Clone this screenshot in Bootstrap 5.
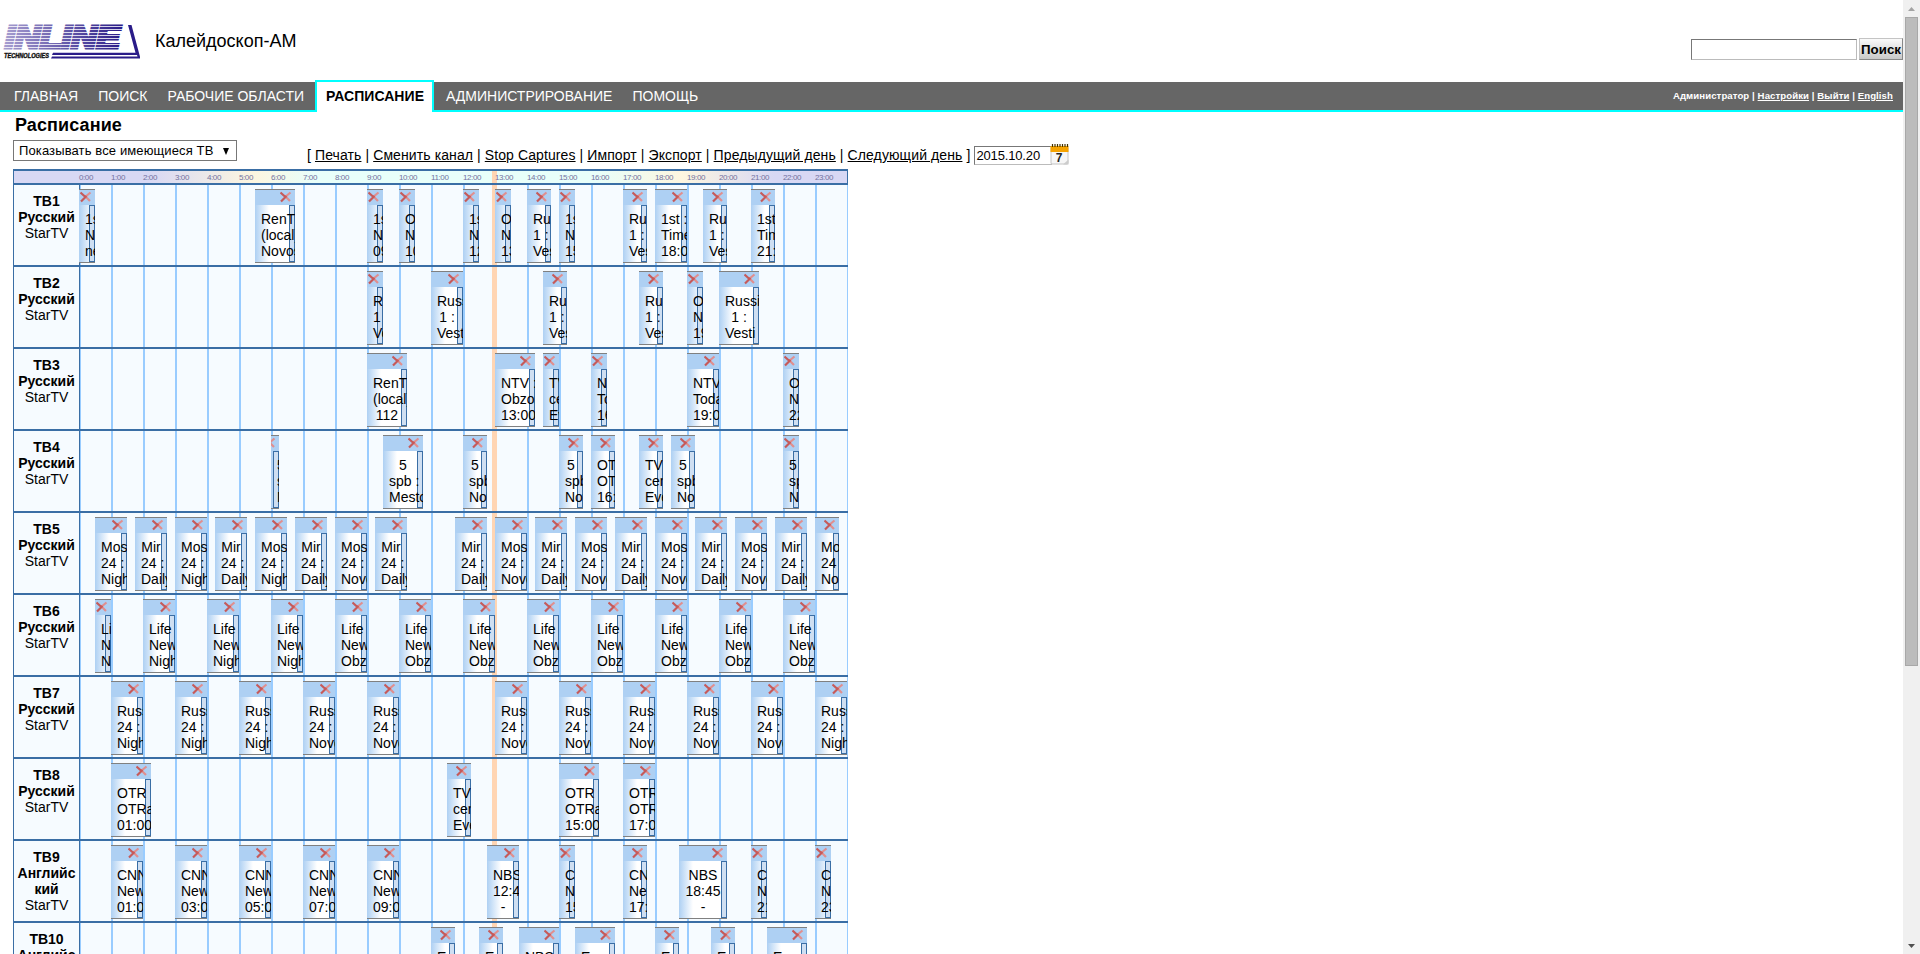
<!DOCTYPE html>
<html lang="ru">
<head>
<meta charset="utf-8">
<title>Расписание</title>
<link href="https://cdn.jsdelivr.net/npm/bootstrap@5.3.0/dist/css/bootstrap.min.css" rel="stylesheet">
<style>
html{overflow:hidden}
body{font-family:"Liberation Sans",Arial,sans-serif;font-size:14px;line-height:16px;color:#000;background:#fff;height:954px;overflow:hidden}
a{color:inherit}
.page-col{width:1903px;height:954px;overflow:hidden}
.top-band{height:82px;padding-left:3px}
.app-name{font-size:18px;line-height:20px;margin:31px 0 0 15px}
.logo-art{margin-top:24px}
.search-form{margin-top:38px;gap:2px}
.search-box{width:166px;height:21px;margin-top:1px;border:1px solid #bbb;border-top-color:#777;border-left-color:#777;padding:0 2px}
.search-btn{width:44px;height:22px;border:1px solid #c4c4c4;border-right-color:#888;border-bottom-color:#888;background:linear-gradient(#fafafa,#c8c8c8);font-weight:700;font-size:13.3px;line-height:20px;padding:1px 0 0;white-space:nowrap}
.main-bar{height:30px;background:#666;border-bottom:2px solid #0ff;padding-left:4px;color:#fff}
.main-bar .tab-item{padding:6px 10px 0;height:30px;text-decoration:none;color:#fff;white-space:nowrap}
.main-bar .tab-item.active{background:#fff;color:#000;font-weight:700;letter-spacing:.05px;border:2px solid #0ff;border-bottom:0;height:32px;margin:-2px 2px 0 1px;padding:6px 8px 0 9px;width:119px}
.user-links{font-size:9.6px;font-weight:700;letter-spacing:.09px;padding:6px 10px 0 0;white-space:nowrap}
.page-title{font-size:18px;line-height:20px;letter-spacing:.1px;font-weight:700;margin:3px 0 0 15px}
.tools-row{padding-left:13px;height:34px}
.tv-select{width:224px;height:21px;margin-top:5px;border:1px solid #777;padding:2px 5px 0;white-space:nowrap;font-size:13px;letter-spacing:.12px}
.tv-select svg{margin:5px 2px 0 0}
.action-links{margin:12px 0 0 70px;white-space:pre;letter-spacing:.1px}
.date-box{width:78px;height:19px;margin:11px 0 0 4px;border:1px solid #bbb;border-top-color:#777;border-left-color:#777;padding:1px 1px 0;font-size:13px;letter-spacing:-.15px}
.cal-icon{margin:9px 0 0 -2px}
.sched{width:835px;margin-left:13px;border-left:1px solid #3a6ea5;border-top:2px solid #3a6ea5}
.hours-row{height:14px;border-bottom:2px solid #3a6ea5;border-right:1px solid #3a6ea5;padding-left:65px;font-size:8px;letter-spacing:-.4px;line-height:12px;color:#7373a0;
 background:linear-gradient(90deg,#d8d8f4 0,#d8d8f4 135px,#fdf6e0 240px,#e8fffa 300px,#e8fffa 580px,#fdf6e0 668px,#d8d8f4 760px)}
.hours-row span{width:32px;flex:none;padding-top:1px;position:relative}
.hours-row::before{content:"";position:absolute;left:478px;top:0;width:5px;height:12px;background:#ffd5b3}
.ch-row{height:82px;background:#f6fbff;border-bottom:2px solid #3a6ea5}
.ch-name{width:65px;flex:none;padding-top:8px;text-align:center}
.track{flex:1;border-left:1px solid #3a6ea5;background:repeating-linear-gradient(90deg,#9cf 0 2px,transparent 2px 32px) border-box}
.track::before{content:"";position:absolute;left:412px;top:0;width:5px;bottom:0;background:#ffd5b3}
.rec{top:4px;height:74px;border-top:1px solid #808080;border-bottom:1px solid #808080;background:linear-gradient(90deg,#aed0f3,#fff 14px);overflow:hidden}
.rec-head{height:15px;background:#aed0f3}
.rec-head svg{right:3px;top:1px}
.rec-text{padding:6px 6px 0;text-align:center;white-space:nowrap;position:relative;z-index:1}
.rec-grip{right:0;top:15px;bottom:0;width:6px;border:1px solid #3a6ea5;background:#cfdff2;z-index:0}
.scroll-rail{width:17px;height:954px;background:#f0f0f0;padding:7px 2px 6px}
.scroll-thumb{width:13px;height:649px;margin-top:6px;background:#bcbcbc;border:1px solid #a8a8a8}
</style>
</head>
<body class="d-flex">
<main class="page-col">
 <header class="top-band d-flex">
  <svg class="logo-art" width="137" height="36" viewBox="0 0 137 36" aria-label="Inline Technologies">
   <defs>
    <linearGradient id="lg" x1="0" x2="1"><stop offset="0" stop-color="#a59ccf"/><stop offset="1" stop-color="#2a1c88"/></linearGradient>
    <pattern id="bars" width="4" height="3" patternUnits="userSpaceOnUse"><rect y="2.200" width="4" height=".8" fill="#fff"/></pattern>
   </defs>
   <g font-family="Liberation Sans" font-weight="700" font-style="italic">
    <text x="2" y="24" font-size="31" textLength="115" lengthAdjust="spacingAndGlyphs" fill="url(#lg)" stroke="url(#lg)" stroke-width="3.200">INLINE</text>
    <rect width="123" height="27" fill="url(#bars)"/>
    <text x="1" y="34.300" font-size="7.500" textLength="45" lengthAdjust="spacingAndGlyphs" fill="#111" stroke="#111" stroke-width=".4">TECHNOLOGIES</text>
   </g>
   <path d="M125 1h3.500l9 33.500H48l1-2h85.500l-.5-1.500H49l1-2.300h82.500z" fill="#2a1c88"/>
  </svg>
  <div class="app-name">Калейдоскоп-АМ</div>
  <form class="search-form d-flex ms-auto"><input class="search-box" aria-label="Поиск"><button type="button" class="search-btn">Поиск</button></form>
 </header>
 <nav class="main-bar d-flex">
  <a class="tab-item">ГЛАВНАЯ</a><a class="tab-item">ПОИСК</a><a class="tab-item">РАБОЧИЕ ОБЛАСТИ</a><a class="tab-item active">РАСПИСАНИЕ</a><a class="tab-item">АДМИНИСТРИРОВАНИЕ</a><a class="tab-item">ПОМОЩЬ</a>
  <div class="user-links ms-auto">Администратор | <u>Настройки</u> | <u>Выйти</u> | <u>English</u></div>
 </nav>
 <h1 class="page-title">Расписание</h1>
 <div class="tools-row d-flex">
  <div class="tv-select d-flex justify-content-between"><span>Показывать все имеющиеся ТВ</span><svg width="6" height="7"><path d="M0 0h6L3 7z"/></svg></div>
  <div class="action-links">[ <u>Печать</u> | <u>Сменить канал</u> | <u>Stop Captures</u> | <u>Импорт</u> | <u>Экспорт</u> | <u>Предыдущий день</u> | <u>Следующий день</u> ]</div>
  <div class="date-box">2015.10.20</div>
  <svg class="cal-icon" width="19" height="21" viewBox="0 0 19 21">
   <rect x="1" y="3" width="17" height="17" rx="1" fill="#f6f6f6" stroke="#c4c4c4"/>
   <rect x=".5" y="2" width="18" height="6" fill="#f5a300"/>
   <path d="M2.500 3V0M5 3V0M7.500 3V0M10 3V0M12.500 3V0M15 3V0M17.500 3V0" stroke="#443300" stroke-width="1.200"/>
   <path d="M13 20.500l5.500-5v5z" fill="#ccc"/>
   <text x="9.200" y="18" font-family="Liberation Sans" font-weight="700" font-size="12" text-anchor="middle" fill="#222">7</text>
  </svg>
 </div>
 <section class="sched" id="sched">
  <div class="hours-row d-flex position-relative" id="hours"></div>
 </section>
</main>
<aside class="scroll-rail d-flex flex-column align-items-center">
 <svg width="7" height="4"><path d="M0 4L3.500 0L7 4z" fill="#a3a3a3"/></svg>
 <div class="scroll-thumb"></div>
 <svg class="mt-auto" width="7" height="4"><path d="M0 0L3.500 4L7 0z" fill="#505050"/></svg>
</aside>
<script src="https://cdn.jsdelivr.net/npm/bootstrap@5.3.0/dist/js/bootstrap.bundle.min.js"></script>
<script>
const RU='Russia|1 :|Vesti', M=n=>'Moscow|24 :|'+n, D='Mir|24 :|Daily', S='5|spb :|Novosti', L=n=>'Life|News|'+n, R=n=>'Russia|24 :|'+n, C=t=>'CNN|News|'+t+':00', E='Euronews :||';
// each item: start hour, length in quarter hours, text lines
const rows=[
 ['Русский',[[0,2,'1st :|News|news'],[5.5,5,'RenTV|(local) :|Novosti'],[9,2,'1st :|News|09:00'],[10,2,'ORT|News|10:00'],[12,2,'1st :|News|12:00'],[13,2,'ORT|News|13:00'],[14,3,RU],[15,2,'1st :|News|15:00'],[17,3,RU],[18,4,'1st :|Time|18:00'],[19.5,3,RU],[21,3,'1st :|Time|21:00']]],
 ['Русский',[[9,2,RU],[11,4,RU],[14.5,3,RU],[17.5,3,RU],[19,2,'ORT|News|19:00'],[20,5,RU]]],
 ['Русский',[[9,5,'RenTV|(local) :|112'],[13,5,'NTV :|Obzor|13:00'],[14.5,2,'TV|center|Events'],[16,2,'NTV :|Today|16:00'],[19,4,'NTV :|Today|19:00'],[22,2,'ORT|News|22:00']]],
 ['Русский',[[6,1,S],[9.5,5,'5|spb :|Mesto'],[12,3,S],[15,3,S],[16,3,'OTR :|OTRa|16:00'],[17.5,3,'TV|center|Events'],[18.5,3,S],[22,2,S]]],
 ['Русский',[[.5,4,M('Night')],[1.75,4,D],[3,4,M('Night')],[4.25,4,D],[5.5,4,M('Night')],[6.75,4,D],[8,4,M('Novosti')],[9.25,4,D],[11.75,4,D],[13,4,M('Novosti')],[14.25,4,D],[15.5,4,M('Novosti')],[16.75,4,D],[18,4,M('Novosti')],[19.25,4,D],[20.5,4,M('Novosti')],[21.75,4,D],[23,3,M('Novosti')]]],
 ['Русский',[[.5,2,L('Night')],...[2,4,6].map(h=>[h,4,L('Night')]),...[8,10,12,14,16,18,20,22].map(h=>[h,4,L('Obzor')])]],
 ['Русский',[...[1,3,5,23].map(h=>[h,4,R('Night')]),...[7,9,13,15,17,19,21].map(h=>[h,4,R('Novosti')])]],
 ['Русский',[[1,5,'OTR :|OTRa|01:00'],[11.5,3,'TV|center|Events'],[15,5,'OTR :|OTRa|15:00'],[17,4,'OTR :|OTRa|17:00']]],
 ['Английс<br>кий',[...[1,3,5,7,9].map(h=>[h,4,C('0'+h)]),[12.75,4,'NBS|12:45|-'],[15,2,C(15)],[17,3,C(17)],[18.75,6,'NBS|18:45|-'],[21,2,C(21)],[23,2,C(23)]]],
 ['Английс<br>кий',[[11,3,E],[12.5,3,E],[13.75,5,'NBS||'],[15.5,5,E],[18,3,E],[19.75,3,E],[21.5,5,E]]]
];
const del='<svg class="position-absolute" width="12" height="12" viewBox="0 0 12 12"><path d="M5 6L10.500 1.500M5 5L10 10" stroke="#e08f8f" stroke-width="2.200"/><path d="M.5 1.500L6 6.500M6.500 5L1 10.500" stroke="#c65a5a" stroke-width="2.200"/></svg>';
const hours=document.getElementById('hours'), sched=document.getElementById('sched');
for(let h=0;h<24;h++) hours.insertAdjacentHTML('beforeend',`<span>${h}:00</span>`);
rows.forEach(([lang,recs],i)=>{
 const items=recs.map(([s,q,t])=>`<div class="rec position-absolute" style="left:${s*32-1}px;width:${q*8}px"><div class="rec-head position-relative">${del}</div><div class="rec-grip position-absolute"></div><div class="rec-text">${t.replace(/ :/g,'&nbsp;:').split('|').join('<br>')}</div></div>`).join('');
 sched.insertAdjacentHTML('beforeend',`<div class="ch-row d-flex"><div class="ch-name"><b>ТВ${i+1}<br>${lang}</b><br>StarTV</div><div class="track position-relative">${items}</div></div>`);
});
</script>
</body>
</html>
